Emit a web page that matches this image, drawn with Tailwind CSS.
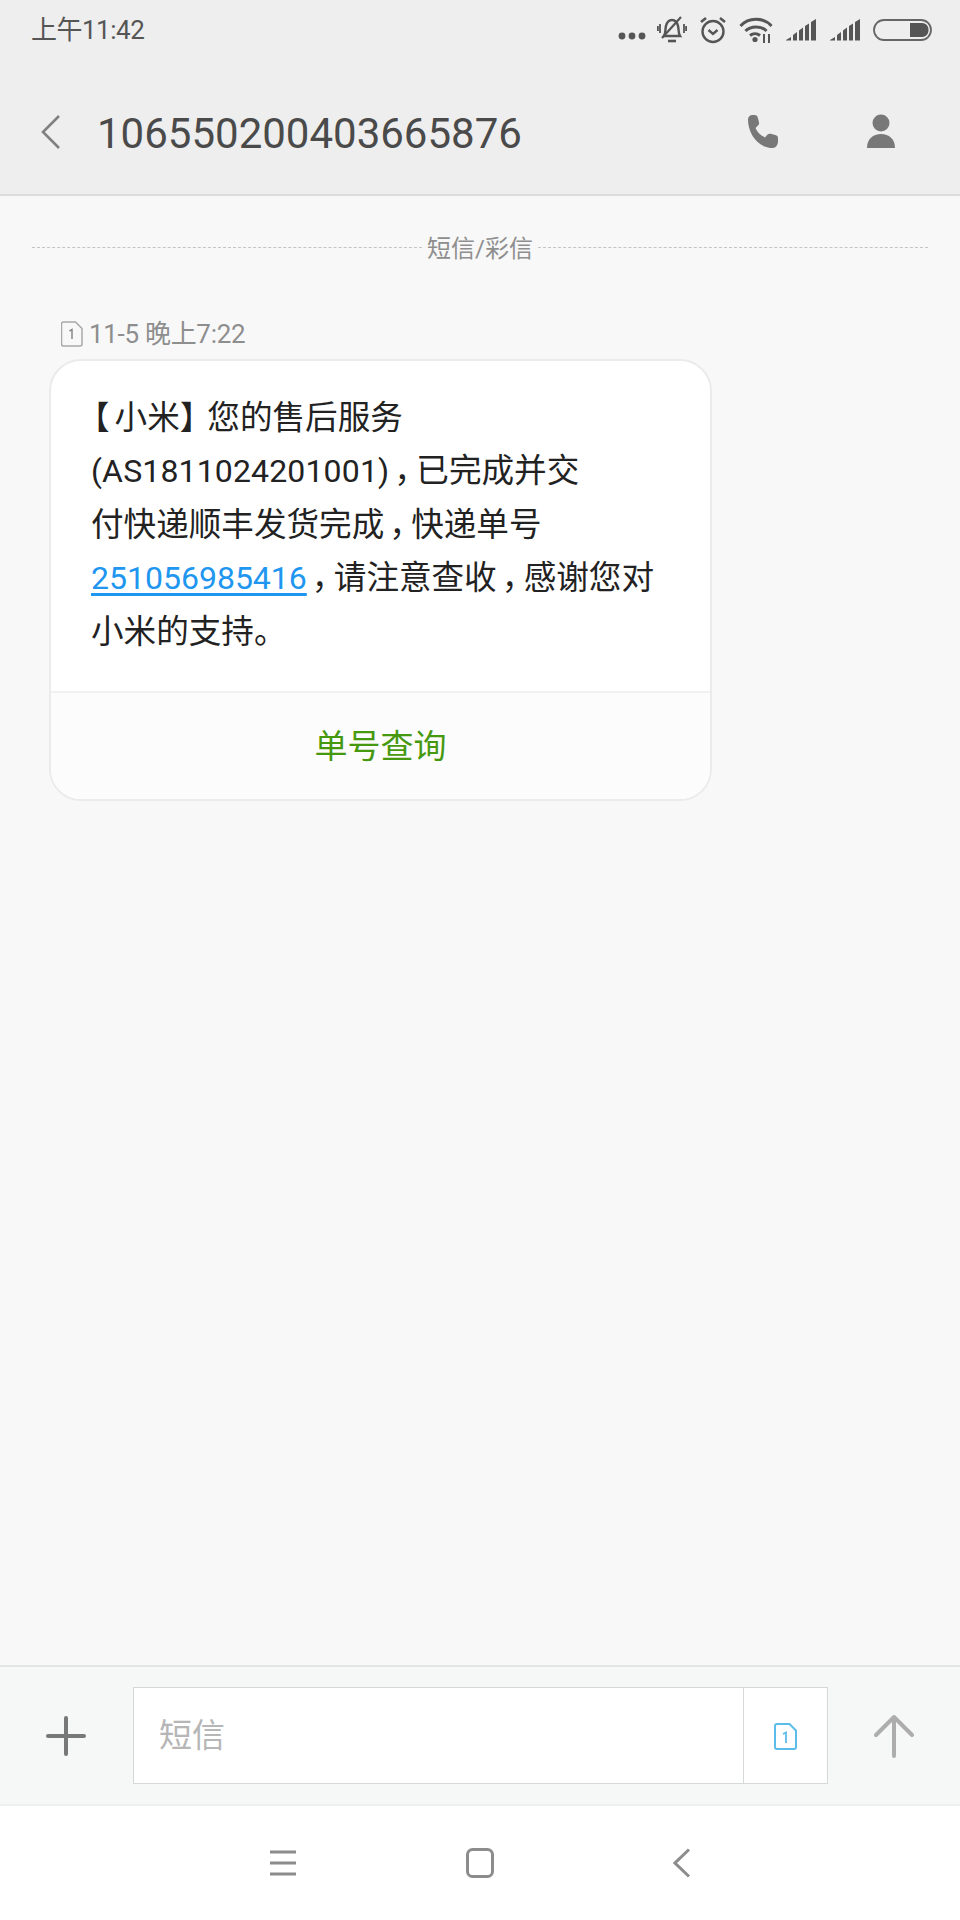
<!DOCTYPE html>
<html lang="zh-CN">
<head>
    <meta charset="UTF-8">
    <meta name="viewport" content="width=device-width, initial-scale=1.0">
    <title>短信</title>
    <script src="https://cdn.jsdelivr.net/npm/@tailwindcss/browser@4"></script>
</head>
<body class="bg-[#f8f8f8] font-['Roboto','Noto_Sans_CJK_SC',sans-serif]">
<div class="flex flex-col w-[960px] h-[1920px] overflow-hidden">

    <!-- status bar + title -->
    <header class="h-[196px] shrink-0 bg-[#eeeeee] border-b-2 border-[#dcdcdc]">
        <div class="h-[60px] pl-[31px] pr-[28px] flex items-center justify-between">
            <span class="text-[26px] leading-none tracking-[-0.5px] text-[#555] -mt-[1px]">上午11:42</span>
            <div class="flex items-center h-[44px]">
                <svg class="w-[28px] h-[12px] mt-[12px] mr-[11px]" viewBox="0 0 28 12" fill="#555"><circle cx="4" cy="6" r="3.4"/><circle cx="14" cy="6" r="3.4"/><circle cx="24" cy="6" r="3.4"/></svg>
                <svg class="w-[30px] h-[28px] mr-[12px]" viewBox="0 0 30 28" fill="none" stroke="#555" stroke-width="2.4"><path d="M7 20c2-3 1-7 2-10 1-4 3-6 6-6s5 2 6 6c1 3 0 7 2 10H7z"/><path d="M11 25h8" stroke-width="2.6"/><path d="M5 22 24 1" stroke-width="2.2"/><path d="M3 8v9M0.900 10v5M27 8v9M29.100 10v5" stroke-width="1.800"/></svg>
                <svg class="w-[28px] h-[28px] mr-[12px]" viewBox="0 0 28 28" fill="none" stroke="#555" stroke-width="2.4"><circle cx="14" cy="15.500" r="10.500"/><path d="M9.500 14l4.500 4 4.500-4"/><path d="M2 6l5-4M26 6l-5-4" stroke-width="2.600"/></svg>
                <svg class="w-[34px] h-[26px] mr-[13px]" viewBox="0 0 34 26" fill="none" stroke="#555" stroke-width="3"><path d="M1.500 9c8-9 23-9 31 0"/><path d="M6.500 14c5-5.500 16-5.500 21 0"/><path d="M11 18.500c3-2.500 7-2.500 10 0"/><circle cx="16" cy="22.500" r="2.600" fill="#555" stroke="none"/><path d="M25 17v9M30 17v9" stroke-width="2"/></svg>
                <svg class="w-[31px] h-[22px] mr-[13px]" viewBox="0 0 31 22" fill="#555"><path d="M0 21l5-3v3.500H0zM7 16l4-3v8.500H7zM13 11.500l4-3v13h-4zM19 7l4-2.500v17h-4zM25 3l5-3v21.500h-5z"/></svg>
                <svg class="w-[31px] h-[22px] mr-[12px]" viewBox="0 0 31 22" fill="#555"><path d="M0 21l5-3v3.500H0zM7 16l4-3v8.500H7zM13 11.500l4-3v13h-4zM19 7l4-2.500v17h-4zM25 3l5-3v21.500h-5z"/></svg>
                <svg class="w-[59px] h-[22px]" viewBox="0 0 59 22" fill="none"><rect x="1" y="1" width="57" height="20" rx="10" stroke="#666" stroke-width="1.800"/><path d="M37 4h12c4 0 6.500 3 6.500 7s-2.500 7-6.500 7H37z" fill="#555"/></svg>
            </div>
        </div>
        <div class="h-[134px] flex items-center">
            <svg class="ml-[40px] w-[20px] h-[36px] mt-[9px]" viewBox="0 0 20 36" fill="none" stroke="#808080" stroke-width="2.600"><path d="M19 2 3 18l16 16"/></svg>
            <h1 class="ml-[37px] text-[42px] leading-none text-[#4a4a4a] mt-[13px]">106550200403665876</h1>
            <div class="ml-auto flex items-center mt-[9px]">
                <svg class="w-[36px] h-[36px] mr-[85px]" viewBox="0 0 36 36" fill="#787878"><path d="M3 5.500C3 3 5 1 7.500 1h2c1.500 0 2.700.8 3.200 2.200l1.300 5c.3 1.300 0 2.500-1 3.400L10.500 14c1.800 4.300 5 7.500 9.500 9.500l2.300-2.700c.9-1 2.200-1.300 3.400-1l5.300 1.400c1.300.4 2 1.600 2 3v3.300c0 3-2.200 6.500-5 6.500C13 34 3 20 3 5.500z"/></svg>
                <svg class="w-[30px] h-[36px] mr-[64px]" viewBox="0 0 30 36" fill="#787878"><circle cx="15" cy="9" r="8.500"/><path d="M1 34c0-9 6-14 14-14s14 5 14 14z"/></svg>
            </div>
        </div>
    </header>

    <!-- conversation -->
    <main class="flex-1 min-h-0 pt-[29px]">
        <div class="flex items-center px-[32px] h-[44px]">
            <div class="flex-1 border-t border-dashed border-[#c4c4c4]"></div>
            <span class="text-[24px] leading-none text-[#8e8e8e] px-[5px] mt-[4px]">短信/彩信</span>
            <div class="flex-1 border-t border-dashed border-[#c4c4c4]"></div>
        </div>

        <div class="flex items-center ml-[61px] mt-[45px] h-[40px]">
            <svg class="w-[22px] h-[26px]" viewBox="0 0 22 26" fill="none" stroke="#a8a8a8" stroke-width="1.500"><path d="M2.500 1h12L21 7.500v15.500a2 2 0 0 1-2 2H2.500a2 2 0 0 1-2-2V3a2 2 0 0 1 2-2z"/><path d="M8.500 10l2.500-1.500V18" stroke="#888"/></svg>
            <span class="ml-[6px] text-[26px] leading-none tracking-[-0.3px] text-[#8e8e8e]">11-5 晚上7:22</span>
        </div>

        <article class="ml-[49px] w-[663px] h-[442px] mt-[5px] rounded-[32px] border-2 border-[#ebebeb] overflow-hidden bg-white flex flex-col">
            <div class="h-[330px] shrink-0 pl-[40px] pt-[31px] text-[32.6px] leading-[53.4px] text-[#222]">
                <p><span class="-ml-[14px] tracking-[5px]">【</span>小米<span class="tracking-[-5px]">】</span>您的售后服务</p>
                <p><span class="text-[32px] tracking-[0.15px]">(AS1811024201001)</span><span class="pl-[5px] tracking-[-10.6px]">，</span>已完成并交</p>
                <p>付快递顺丰发货完成<span class="pl-[5px] tracking-[-10.6px]">，</span>快递单号</p>
                <p><span class="text-[32px] text-[#2196f0] underline underline-offset-[4px]">251056985416</span><span class="pl-[5px] tracking-[-10.6px]">，</span>请注意查收<span class="pl-[5px] tracking-[-10.6px]">，</span>感谢您对</p>
                <p>小米的支持。</p>
            </div>
            <div class="flex-1 border-t-2 border-[#f1f1f1] bg-[#fcfcfc] flex items-center justify-center text-[33px] leading-none text-[#46990f]">单号查询</div>
        </article>
    </main>

    <!-- compose bar -->
    <div class="h-[141px] shrink-0 bg-[#f6f7f7] border-t-2 border-[#e3e5e5] border-b-2 border-b-[#eff0f0] flex items-center">
        <div class="w-[133px] shrink-0 flex justify-center pr-[1px]">
            <svg class="w-[40px] h-[40px]" viewBox="0 0 40 40" stroke="#787878" stroke-width="4" stroke-linecap="round"><path d="M20 2v36M2 20h36"/></svg>
        </div>
        <div class="w-[695px] h-[97px] mb-[1px] shrink-0 bg-white border border-[#d5d8d8] flex">
            <div class="flex-1 flex items-center pl-[25px] text-[33px] leading-none text-[#b6b6b6]">短信</div>
            <div class="w-[84px] border-l border-[#d5d8d8] flex items-center justify-center pt-[3px]">
                <svg class="w-[23px] h-[27px]" viewBox="0 0 23 27" fill="none" stroke="#5cbcea" stroke-width="2"><path d="M3 1h12.500L22 7.500V24a2 2 0 0 1-2 2H3a2 2 0 0 1-2-2V3a2 2 0 0 1 2-2z"/><path d="M9 11l3-1.500V20" stroke-width="1.800"/></svg>
            </div>
        </div>
        <div class="flex-1 flex justify-center pr-[1px]">
            <svg class="w-[40px] h-[44px]" viewBox="0 0 40 44" fill="none" stroke="#adadad" stroke-width="4" stroke-linecap="round" stroke-linejoin="round"><path d="M20 42V3M2 21 20 3l18 18"/></svg>
        </div>
    </div>

    <!-- nav bar -->
    <nav class="h-[114px] shrink-0 bg-white flex items-start pt-[42px]">
        <svg class="ml-[269px] w-[28px] h-[26px] mt-[2px]" viewBox="0 0 28 26" stroke="#8c8c8c" stroke-width="3"><path d="M1 2h26M1 13h26M1 24h26"/></svg>
        <svg class="ml-[169px] w-[28px] h-[30px]" viewBox="0 0 28 30" fill="none" stroke="#8c8c8c" stroke-width="3"><rect x="1.500" y="1.500" width="25" height="27" rx="5"/></svg>
        <svg class="ml-[179px] w-[18px] h-[30px]" viewBox="0 0 18 30" fill="none" stroke="#8c8c8c" stroke-width="3"><path d="M16 1.500 2 15l14 13.500"/></svg>
    </nav>
</div>
</body>
</html>
